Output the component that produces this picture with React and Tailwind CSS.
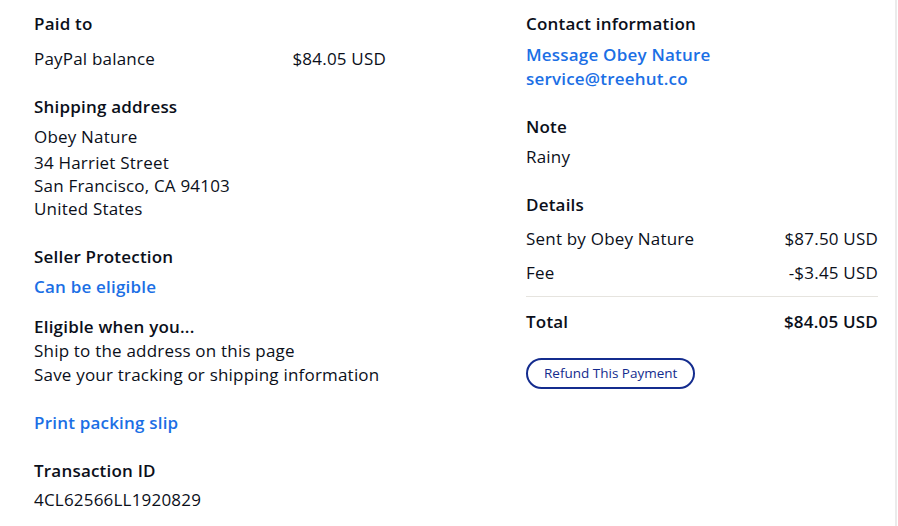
import React from "react";

const ink = "text-[#0b0f1a]";
const link = "text-[#1b6fe5] font-semibold";

function Heading({ children, className = "" }) {
    return <h3 className={`font-semibold leading-6 ${ink} ${className}`}>{children}</h3>;
}

function Row({ label, value, className = "", bold = false }) {
    return (
        <div className={`flex justify-between leading-6 ${bold ? "font-semibold" : ""} ${className}`}>
            <span>{label}</span>
            <span>{value}</span>
        </div>
    );
}

export default function App() {
    return (
        <div
            className={`w-[897px] h-[526px] bg-white border-r-2 border-[#ebebeb] pl-[34px] pt-[12px] flex text-[17px] tracking-[0.2px] ${ink}`}
            style={{ fontFamily: '"Open Sans", "Noto Sans", sans-serif' }}
        >
            {/* left column */}
            <div className="w-[352px] flex flex-col">
                <Heading>Paid to</Heading>
                <Row label="PayPal balance" value="$84.05 USD" className="mt-[11px]" />

                <Heading className="mt-6">Shipping address</Heading>
                <p className="mt-[6px] leading-6">Obey Nature</p>
                <div className="mt-[2px] leading-[23px]">
                    <p>34 Harriet Street</p>
                    <p>San Francisco, CA 94103</p>
                    <p>United States</p>
                </div>

                <Heading className="mt-[25px]">Seller Protection</Heading>
                <a className={`mt-[6px] leading-6 ${link}`}>Can be eligible</a>

                <Heading className="mt-4">Eligible when you...</Heading>
                <p className="leading-6">Ship to the address on this page</p>
                <p className="leading-6">Save your tracking or shipping information</p>

                <a className={`mt-6 leading-6 ${link}`}>Print packing slip</a>

                <Heading className="mt-6">Transaction ID</Heading>
                <p className="mt-[5px] leading-6">4CL62566LL1920829</p>
            </div>

            {/* right column */}
            <div className="w-[352px] ml-[140px] flex flex-col">
                <Heading>Contact information</Heading>
                <a className={`mt-[7px] leading-6 ${link}`}>Message Obey Nature</a>
                <a className={`leading-6 ${link}`}>service@treehut.co</a>

                <Heading className="mt-6">Note</Heading>
                <p className="mt-[6px] leading-6">Rainy</p>

                <Heading className="mt-6">Details</Heading>
                <Row label="Sent by Obey Nature" value="$87.50 USD" className="mt-[10px]" />
                <Row label="Fee" value="-$3.45 USD" className="mt-[10px]" />
                <div className="mt-[11px] h-px bg-[#e6e4df]" />
                <Row label="Total" value="$84.05 USD" bold className="mt-[13px]" />

                <div className="mt-6">
                    <button className="h-[31px] px-[16px] rounded-full border-2 border-[#142c8e] text-[#142c8e] text-[13.5px] tracking-normal font-medium leading-none">
                        Refund This Payment
                    </button>
                </div>
            </div>
        </div>
    );
}
